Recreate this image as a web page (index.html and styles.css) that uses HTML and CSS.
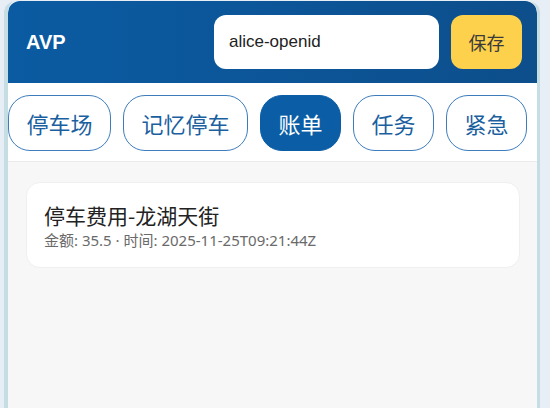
FILE: index.html
```html
<!DOCTYPE html>
<html lang="zh-CN">
<head>
    <meta charset="UTF-8">
    <meta name="viewport" content="width=device-width, initial-scale=1.0">
    <title>AVP</title>
    <link rel="stylesheet" href="styles.css">
</head>
<body>
    <div class="phone">
        <div class="header">
            <div class="brand">AVP</div>
            <input class="user-input" type="text" value="alice-openid">
            <button class="btn-save">保存</button>
        </div>

        <div class="tabs">
            <button class="tab">停车场</button>
            <button class="tab">记忆停车</button>
            <button class="tab active">账单</button>
            <button class="tab">任务</button>
            <button class="tab">紧急</button>
        </div>

        <div class="content">
            <div class="card">
                <div class="card-title">停车费用-龙湖天街</div>
                <div class="card-meta">金额: 35.5 · 时间: 2025-11-25T09:21:44Z</div>
            </div>
        </div>
    </div>
</body>
</html>
```

FILE: styles.css
```css
* {
    margin: 0;
    padding: 0;
    box-sizing: border-box;
}

body {
    font-family: "Noto Sans", "Noto Sans CJK SC", sans-serif;
    background: #e8eef6;
    height: 408px;
    overflow: hidden;
}

.phone {
    width: 536px;
    height: 420px;
    margin: 1px 0 0 4px;
    border-left: 4px solid #c6dde3;
    border-right: 3px solid #c6dde3;
    border-radius: 12px 12px 0 0;
    background: #f7f7f7;
    overflow: hidden;
}

.header {
    height: 82px;
    display: flex;
    align-items: center;
    gap: 12px;
    padding: 0 15px 0 18px;
    background: linear-gradient(90deg, #0b5ba2 0%, #0c5496 60%, #0d4e8b 100%);
    border-radius: 12px 12px 0 0;
}

.brand {
    flex: 1;
    color: #fff;
    font-family: "Liberation Sans", "Noto Sans CJK SC", sans-serif;
    font-weight: bold;
    font-size: 20px;
}

.user-input {
    width: 225px;
    height: 54px;
    border: none;
    border-radius: 12px;
    background: #fff;
    padding: 0 15px;
    font-family: "Liberation Sans", sans-serif;
    font-size: 17px;
    color: #222;
    outline: none;
}

.btn-save {
    width: 71px;
    height: 54px;
    border: none;
    border-radius: 12px;
    background: #fdd14c;
    color: #3a3a3a;
    font-family: "Noto Sans CJK SC", sans-serif;
    font-size: 18px;
}

.tabs {
    display: flex;
    gap: 12px;
    padding: 12px 0 10px;
    background: #fff;
    border-bottom: 1px solid #ebebeb;
    white-space: nowrap;
    overflow: hidden;
}

.tab {
    flex-shrink: 0;
    height: 56px;
    padding: 0 17.5px;
    border: 1.5px solid #3d7dbc;
    border-radius: 22px;
    background: #fff;
    color: #1b5f9f;
    font-family: "Noto Sans CJK SC", sans-serif;
    font-size: 22px;
}

.tab.active {
    background: #0b5ea6;
    border-color: #0b5ea6;
    color: #fff;
}

.content {
    padding: 20px 17px 0 18px;
}

.card {
    background: #fff;
    border: 1px solid #efefef;
    border-radius: 14px;
    padding: 17px 17px 17px;
}

.card-title {
    font-family: "Noto Sans CJK SC", sans-serif;
    font-size: 21px;
    line-height: 30px;
    color: #222;
}

.card-meta {
    font-size: 15px;
    line-height: 20px;
    color: #6a6a6a;
}
```
